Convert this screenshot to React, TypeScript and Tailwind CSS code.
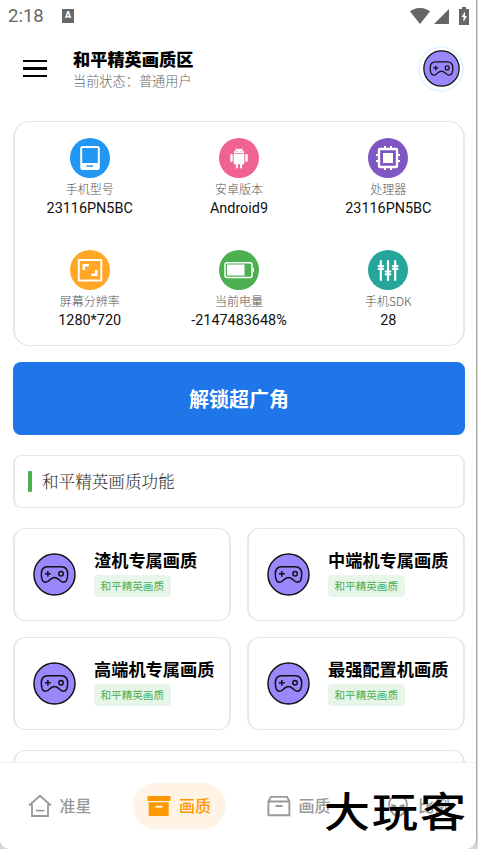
import type { ReactNode } from 'react';

const GamepadBadge = ({ className }: { className: string }) => (
  <svg viewBox="0 0 44 44" className={className} fill="none" stroke="#111" strokeWidth="1.500">
    <circle cx="22" cy="22" r="21" fill="#9b87fc" />
    <path d="M15 14h14c4.200 0 6.500 3 6.500 7.500 0 5-1.500 8.500-4.500 8.500-2 0-3-1.200-4.500-2.800C24.500 25.500 24 25 22 25s-2.500.5-4.500 2.200C16 28.800 15 30 13 30c-3 0-4.500-3.500-4.500-8.500 0-4.500 2.300-7.500 6.500-7.500z" />
    <path d="M12.200 21.300h6M15.200 18.300v6" />
    <circle cx="28.700" cy="21.300" r="2.300" />
  </svg>
);

const PhoneIcon = () => (
  <svg viewBox="0 0 40 40" className="size-10">
    <path fill="#fff" fillRule="evenodd" d="M12.500 8h15a2.300 2.300 0 0 1 2.300 2.300v19.400a2.300 2.300 0 0 1-2.300 2.300h-15a2.300 2.300 0 0 1-2.300-2.300V10.300A2.300 2.300 0 0 1 12.500 8zm-.3 2v15h15.600V10zm4.300 17.300v1.500h6.500v-1.500z" />
  </svg>
);

const AndroidIcon = () => (
  <svg viewBox="0 0 40 40" className="size-10" fill="#fff">
    <path d="M14.700 15.300c.2-2 1.200-3 2.500-3.800l-1-1.300.5-.4 1.100 1.500a6 6 0 0 1 4.400 0l1.100-1.500.5.4-1 1.300c1.400.8 2.300 1.900 2.500 3.800z" />
    <path d="M14.700 16h10.600v9.200c0 .8-.4 1-1 1h-1.200v3.200a1 1 0 0 1-2 0v-3.200h-2.200v3.200a1 1 0 0 1-2 0v-3.200h-1.200c-.6 0-1-.3-1-1z" />
    <rect x="11.300" y="16" width="2.400" height="8" rx="1" />
    <rect x="26.300" y="16" width="2.400" height="8" rx="1" />
    <g fill="#f06292">
      <circle cx="17.800" cy="13.300" r=".6" />
      <circle cx="22.200" cy="13.300" r=".6" />
    </g>
  </svg>
);

const ChipIcon = () => (
  <svg viewBox="0 0 40 40" className="size-10" fill="none" stroke="#fff" strokeWidth="2">
    <rect x="11" y="11" width="18" height="18" rx="1" strokeWidth="2.400" />
    <rect x="15" y="15" width="10" height="10" fill="#fff" stroke="none" />
    <path d="M17 8v3M23 8v3M17 29v3M23 29v3M8 17h3M8 23h3M29 17h3M29 23h3" />
  </svg>
);

const ResolutionIcon = () => (
  <svg viewBox="0 0 40 40" className="size-10" fill="none" stroke="#fff">
    <rect x="8.800" y="10" width="22.500" height="20.500" strokeWidth="1.900" />
    <path strokeWidth="2.600" d="M13.800 20v-4.800h5M26.300 20v4.800h-5" />
  </svg>
);

const BatteryIcon = () => (
  <svg viewBox="0 0 40 40" className="size-10">
    <rect x="6" y="12.700" width="27" height="14.800" rx="2" fill="none" stroke="#fff" strokeWidth="1.500" />
    <rect x="8" y="14.500" width="17.500" height="11" fill="#fff" />
    <path fill="#fff" d="M33.500 18h1.500v4h-1.500z" />
  </svg>
);

const SlidersIcon = () => (
  <svg viewBox="0 0 40 40" className="size-10" fill="none" stroke="#fff" strokeWidth="2.200" strokeLinecap="round">
    <path d="M12.800 11v19M20 11v19M27.200 11v19M10.600 16.200h4.600M10.600 19h4.600M17.700 21.500h4.600M17.700 24.300h4.600M24.900 16.200h4.600M24.900 19h4.600" />
  </svg>
);

const infos: { label: string; value: string; color: string; icon: ReactNode }[] = [
  { label: '手机型号', value: '23116PN5BC', color: 'bg-[#2196f3]', icon: <PhoneIcon /> },
  { label: '安卓版本', value: 'Android9', color: 'bg-[#f06292]', icon: <AndroidIcon /> },
  { label: '处理器', value: '23116PN5BC', color: 'bg-[#7e57c2]', icon: <ChipIcon /> },
  { label: '屏幕分辨率', value: '1280*720', color: 'bg-[#ffa726]', icon: <ResolutionIcon /> },
  { label: '当前电量', value: '-2147483648%', color: 'bg-[#4caf50]', icon: <BatteryIcon /> },
  { label: '手机SDK', value: '28', color: 'bg-[#26a69a]', icon: <SlidersIcon /> },
];

const features = ['渣机专属画质', '中端机专属画质', '高端机专属画质', '最强配置机画质'];

const HomeIcon = () => (
  <svg viewBox="0 0 24 24" className="size-6" fill="none" stroke="currentColor" strokeWidth="1.800">
    <path d="M1 11.500 12 1.800l11 9.700M4 10v12h16V10M8 16.700h8.500" />
  </svg>
);

const ArchiveFilledIcon = () => (
  <svg viewBox="0 0 24 24" className="size-6" fill="currentColor">
    <rect x=".5" y="2" width="23" height="5" rx=".7" />
    <path fillRule="evenodd" d="M1.700 8.200h20V21a1 1 0 0 1-1 1h-18a1 1 0 0 1-1-1zM8.500 11.800v1.900h7v-1.900z" />
  </svg>
);

const ArchiveIcon = () => (
  <svg viewBox="0 0 24 24" className="size-6" fill="none" stroke="currentColor" strokeWidth="1.900">
    <path d="M4 2.900h16l2.400 4.300v14h-21v-14zM1.500 7.500h20.900M8.500 12h7" />
  </svg>
);

const FaceIcon = () => (
  <svg viewBox="0 0 24 24" className="size-6" fill="none" stroke="currentColor" strokeWidth="1.700">
    <path d="M12 1.800c6 0 9 4 9 8.700 0 5-4.500 11.500-9 11.500S3 15.500 3 10.500c0-4.700 3-8.700 9-8.700z" />
    <path d="M6 11c3 0 4.500 1.500 4.800 4C8 15 6.200 13.700 6 11zM18 11c-3 0-4.500 1.500-4.800 4 2.800 0 4.600-1.300 4.800-4z" fill="currentColor" />
  </svg>
);

const tabs: { label: string; icon: ReactNode; active?: boolean }[] = [
  { label: '准星', icon: <HomeIcon /> },
  { label: '画质', icon: <ArchiveFilledIcon />, active: true },
  { label: '画质', icon: <ArchiveIcon /> },
  { label: '比例', icon: <FaceIcon /> },
];

const StatusBar = () => (
  <div className="flex h-8 items-center pl-2 pr-[7px] text-[#666]">
    <span className="w-[38px] pt-[2px] font-[Roboto] text-[18.500px]">2:18</span>
    <span className="ml-4 flex h-[14px] w-3 items-center justify-center rounded-[1px] bg-[#666] font-[Roboto] text-[9px] font-black text-white">
      A
    </span>
    <div className="ml-auto flex items-center">
      <svg viewBox="0 0 20 16" className="h-4 w-5" fill="currentColor">
        <path d="M10 16 0 3.500C5.500-1.200 14.500-1.200 20 3.500z" />
      </svg>
      <svg viewBox="0 0 15 15" className="ml-1 size-[15px]" fill="currentColor">
        <path d="M15 0v15H0z" />
      </svg>
      <svg viewBox="0 0 10 18" className="ml-[10px] h-[18px] w-[10px]">
        <path fill="currentColor" d="M3 0h4v2h3v16H0V2h3z" />
        <path fill="#fff" d="M6 4.500 2.500 10h2v5L8 9H6z" />
      </svg>
    </div>
  </div>
);

const Header = () => (
  <header className="flex h-[73px] items-center pl-[23px] pr-3">
    <div className="flex w-6 flex-col gap-[5px]">
      <span className="h-[2.500px] bg-black" />
      <span className="h-[2.500px] bg-black" />
      <span className="h-[2.500px] bg-black" />
    </div>
    <div className="ml-[26px] pt-[3px]">
      <h1 className="text-[17.200px] leading-[22px] font-black text-black">和平精英画质区</h1>
      <p className="text-[13.200px] leading-[22px] font-light text-[#666]">当前状态：普通用户</p>
    </div>
    <div className="ml-auto flex size-[46px] items-center justify-center rounded-full border-2 border-[#e6f7fe]">
      <GamepadBadge className="size-[37px] shrink-0" />
    </div>
  </header>
);

const BottomBar = () => (
  <nav className="fixed bottom-0 left-0 h-[87px] w-[476px] rounded-b-[10px] border-t border-[#eee] bg-white">
    <div className="flex h-full gap-[26.500px] pl-[13px]">
      {tabs.map((tab, index) => (
        <div
          key={index}
          className={`mt-[20px] flex h-[46px] w-[93px] shrink-0 items-center gap-2 rounded-full pl-[14.500px] text-base font-medium whitespace-nowrap ${
            tab.active ? 'bg-[#fff3e6] font-bold text-[#ff9800]' : 'text-[#999]'
          }`}
        >
          {tab.icon}
          <span className="-mt-0.5">{tab.label}</span>
        </div>
      ))}
    </div>
    <span className="absolute top-[11px] left-[324px] origin-center scale-y-[0.88] text-[46px] leading-[70px] font-medium tracking-[2px] whitespace-nowrap text-black">
      大玩客
    </span>
  </nav>
);

const App = () => {
  return (
    <div className="h-[849px] overflow-hidden bg-[#d6d6d6] font-['Noto_Sans_CJK_SC',sans-serif]">
      <div className="h-full w-[477px] rounded-b-[10px] border-r border-[#aaa] bg-white">
        <StatusBar />
        <Header />

        <main className="mt-4 flex flex-col pl-[13px] pr-[11px]">
          <section className="grid h-[225px] grid-cols-3 content-start rounded-2xl border-x-2 border-y border-[#e8e8e8] pt-4">
            {infos.map((info) => (
              <div key={info.label} className="flex h-[111.500px] flex-col items-center">
                <div className={`size-10 rounded-full ${info.color}`}>{info.icon}</div>
                <span className="mt-[2px] text-[12px] leading-[18px] font-light text-[#555]">{info.label}</span>
                <span className="mt-px font-[Roboto] text-[14.400px] leading-5 text-[#111]">{info.value}</span>
              </div>
            ))}
          </section>

          <button className="mt-4 h-[73px] rounded-lg bg-[#1e76e9] text-[20px] font-bold text-white">
            解锁超广角
          </button>

          <div className="mt-5 flex h-[53px] items-center rounded-lg border-x-2 border-y border-[#e8e8e8] pl-[13px]">
            <span className="h-[21px] w-1 rounded-[1px] bg-[#4caf50]" />
            <h2 className="ml-[10px] font-['Noto_Serif_CJK_SC','Noto_Sans_CJK_SC',serif] text-[16.600px] font-light text-[#333]">
              和平精英画质功能
            </h2>
          </div>

          <div className="mt-5 grid grid-cols-2 gap-4">
            {features.map((name) => (
              <div
                key={name}
                className="flex h-[93px] items-center rounded-xl border-x-2 border-y border-[#e8e8e8] pl-[18px]"
              >
                <GamepadBadge className="size-[43px] shrink-0" />
                <div className="-mt-[4px] ml-[18px] flex flex-col items-start">
                  <h3 className="text-[17.200px] leading-[24px] font-bold whitespace-nowrap text-black">{name}</h3>
                  <span className="mt-[3px] h-[22px] rounded bg-[#e8f5e9] px-[6.500px] text-[10.600px] leading-[22px] text-[#4caf50]">
                    和平精英画质
                  </span>
                </div>
              </div>
            ))}
          </div>

          <div className="mt-5 h-[93px] rounded-xl border-x-2 border-y border-[#e8e8e8]" />
        </main>
      </div>

      <BottomBar />
    </div>
  );
};

export default App;
